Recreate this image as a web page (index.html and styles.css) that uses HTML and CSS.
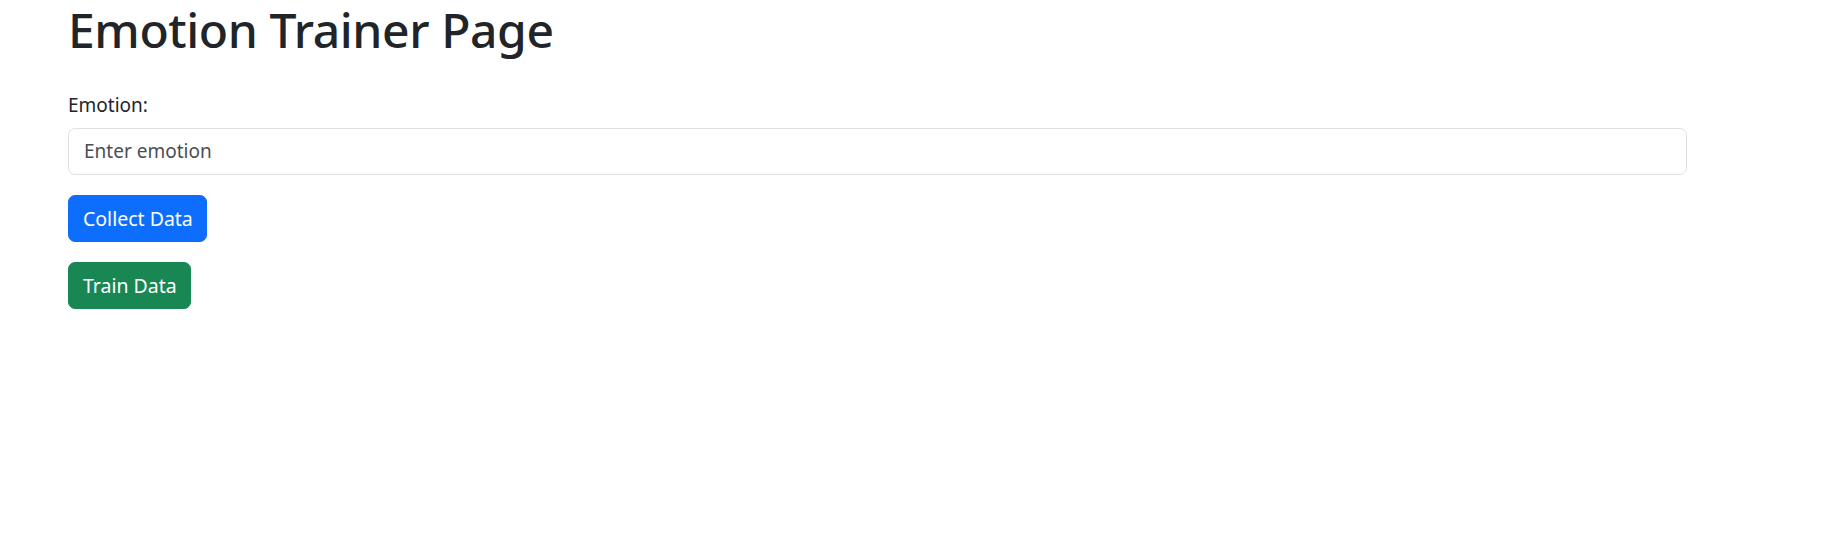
FILE: index.html
```html
<!DOCTYPE html>
<html lang="en">
<head>
    <meta charset="UTF-8">
    <meta name="viewport" content="width=device-width, initial-scale=1.0">
    <title>Emotion Trainer Page</title>
    <link rel="stylesheet" href="styles.css">
</head>
<body>
    <div class="container">
        <h1>Emotion Trainer Page</h1>
        <form class="trainer-form">
            <div class="field">
                <label for="emotion" class="form-label">Emotion:</label>
                <input type="text" id="emotion" class="form-control" placeholder="Enter emotion">
            </div>
            <div class="field">
                <button type="button" class="btn btn-primary">Collect Data</button>
            </div>
            <div class="field">
                <button type="button" class="btn btn-success">Train Data</button>
            </div>
        </form>
    </div>
</body>
</html>
```

FILE: styles.css
```css
body {
    margin: 0;
    padding: 0;
    background: #ffffff;
    color: #212529;
    font-family: 'Noto Sans', 'Open Sans', sans-serif;
    font-size: 20px;
    line-height: 1.5;
}

.container {
    width: 1619px;
    padding-left: 68px;
}

h1 {
    margin: 0 0 10px;
    padding-top: 4px;
    font-size: 48px;
    font-weight: 500;
    line-height: 52px;
    letter-spacing: -0.4px;
}

.trainer-form {
    padding-top: 24px;
}

.field {
    margin-bottom: 20px;
}

.form-label {
    display: inline-block;
    margin-bottom: 8px;
    font-size: 19px;
}

.form-control {
    display: block;
    box-sizing: border-box;
    width: 100%;
    height: 47px;
    padding: 0 15px;
    font-family: inherit;
    font-size: 19px;
    color: #212529;
    background: #ffffff;
    border: 1px solid #dee2e6;
    border-radius: 7px;
}

.form-control::placeholder {
    color: #4a4e52;
}

.btn {
    box-sizing: border-box;
    height: 47px;
    padding: 0 13px 0 14px;
    font-family: inherit;
    font-size: 19.5px;
    color: #ffffff;
    border: 1px solid transparent;
    border-radius: 7px;
    cursor: pointer;
}

.btn-primary {
    background-color: #0d6efd;
    border-color: #0d6efd;
}

.btn-success {
    background-color: #198754;
    border-color: #198754;
}
```
